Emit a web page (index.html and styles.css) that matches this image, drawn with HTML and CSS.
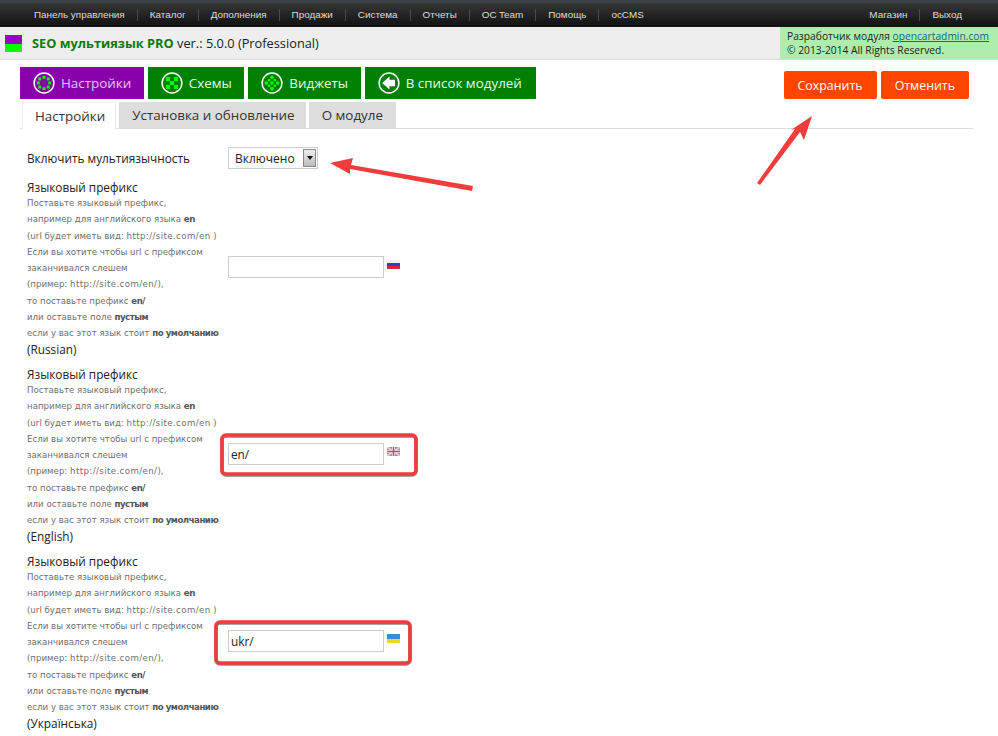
FILE: index.html
```html
<!DOCTYPE html>
<html lang="ru">
<head>
    <meta charset="UTF-8">
    <title>SEO мультиязык PRO</title>
    <link rel="stylesheet" href="styles.css">
</head>
<body>
    <div class="top-nav">
        <ul class="nav-list">
            <li>Панель управления</li>
            <li>Каталог</li>
            <li>Дополнения</li>
            <li>Продажи</li>
            <li>Система</li>
            <li>Отчеты</li>
            <li>OC Team</li>
            <li>Помощь</li>
            <li>ocCMS</li>
        </ul>
        <ul class="nav-list nav-right">
            <li>Магазин</li>
            <li>Выход</li>
        </ul>
    </div>

    <div class="title-bar">
        <div class="title-logo"></div>
        <h1 class="title-text"><b>SEO мультиязык PRO</b> ver.: 5.0.0 (Professional)</h1>
        <div class="dev-info">
            Разработчик модуля <a href="#">opencartadmin.com</a><br>
            © 2013-2014 All Rights Reserved.
        </div>
    </div>

    <div class="content">
        <div class="toolbar">
            <div class="mode-buttons">
                <a class="mode-btn active" href="#">
                    <svg class="mode-icon" viewBox="0 0 24 24">
                        <circle class="ring" cx="12" cy="12" r="10.8"/>
                        <g class="dots">
                            <rect x="10.4" y="4.2" width="3.2" height="3.2"/><rect x="15" y="6" width="3.2" height="3.2"/>
                            <rect x="16.6" y="10.4" width="3.2" height="3.2"/><rect x="15" y="14.8" width="3.2" height="3.2"/>
                            <rect x="10.4" y="16.6" width="3.2" height="3.2"/><rect x="5.8" y="14.8" width="3.2" height="3.2"/>
                            <rect x="4.2" y="10.4" width="3.2" height="3.2"/><rect x="5.8" y="6" width="3.2" height="3.2"/>
                        </g>
                    </svg>
                    Настройки
                </a>
                <a class="mode-btn" href="#">
                    <svg class="mode-icon" viewBox="0 0 24 24">
                        <circle class="ring" cx="12" cy="12" r="10.8"/>
                        <g class="dots">
                            <rect x="5.5" y="5.5" width="4.4" height="4.4"/><rect x="14.1" y="5.5" width="4.4" height="4.4"/>
                            <rect x="9.8" y="9.8" width="4.4" height="4.4"/>
                            <rect x="5.5" y="14.1" width="4.4" height="4.4"/><rect x="14.1" y="14.1" width="4.4" height="4.4"/>
                        </g>
                    </svg>
                    Схемы
                </a>
                <a class="mode-btn" href="#">
                    <svg class="mode-icon" viewBox="0 0 24 24">
                        <circle class="ring" cx="12" cy="12" r="10.8"/>
                        <g class="dots">
                            <circle cx="12" cy="5.8" r="2"/><circle cx="12" cy="12" r="2"/><circle cx="12" cy="18.2" r="2"/>
                            <circle cx="5.8" cy="12" r="2"/><circle cx="18.2" cy="12" r="2"/>
                            <circle cx="9" cy="9" r="1.4"/><circle cx="15" cy="9" r="1.4"/>
                            <circle cx="9" cy="15" r="1.4"/><circle cx="15" cy="15" r="1.4"/>
                        </g>
                    </svg>
                    Виджеты
                </a>
                <a class="mode-btn" href="#">
                    <svg class="mode-icon" viewBox="0 0 24 24">
                        <circle class="ring" cx="12" cy="12" r="10.8"/>
                        <path class="back-arrow" d="M4.5 12 L12.5 5 V8.5 H18.5 V15.5 H12.5 V19 Z"/>
                    </svg>
                    В список модулей
                </a>
            </div>
            <div class="action-buttons">
                <a class="action-btn" href="#">Сохранить</a>
                <a class="action-btn" href="#">Отменить</a>
            </div>
        </div>

        <div class="tabs">
            <a class="tab selected" href="#">Настройки</a>
            <a class="tab" href="#">Установка и обновление</a>
            <a class="tab" href="#">О модуле</a>
        </div>

        <div class="settings">
            <div class="switch-row">
                <div class="switch-label">Включить мультиязычность</div>
                <div class="select-box">
                    <span class="select-value">Включено</span>
                    <span class="select-arrow"></span>
                </div>
            </div>

            <div class="prefix-row">
                <div class="prefix-label">
                    <div class="prefix-title">Языковый префикс</div>
                    <div class="prefix-help">
                        Поставьте языковый префикс,<br>
                        например для английского языка <b>en</b><br>
                        (url будет иметь вид: <span class="url">http://site.com/en</span> )<br>
                        Если вы хотите чтобы url с префиксом<br>
                        заканчивался слешем<br>
                        (пример: <span class="url">http://site.com/en/</span>),<br>
                        то поставьте префикс <b>en/</b><br>
                        или оставьте поле <b>пустым</b><br>
                        если у вас этот язык стоит <b>по умолчанию</b>
                    </div>
                    <div class="prefix-lang">(Russian)</div>
                </div>
                <div class="prefix-field">
                    <input class="prefix-input" type="text" value="">
                    <svg class="flag" viewBox="0 0 13 9">
                        <rect width="13" height="3" fill="#eef0f6"/>
                        <rect y="3" width="13" height="3" fill="#2b3fd0"/>
                        <rect y="6" width="13" height="3" fill="#e0213a"/>
                    </svg>
                </div>
            </div>

            <div class="prefix-row">
                <div class="prefix-label">
                    <div class="prefix-title">Языковый префикс</div>
                    <div class="prefix-help">
                        Поставьте языковый префикс,<br>
                        например для английского языка <b>en</b><br>
                        (url будет иметь вид: <span class="url">http://site.com/en</span> )<br>
                        Если вы хотите чтобы url с префиксом<br>
                        заканчивался слешем<br>
                        (пример: <span class="url">http://site.com/en/</span>),<br>
                        то поставьте префикс <b>en/</b><br>
                        или оставьте поле <b>пустым</b><br>
                        если у вас этот язык стоит <b>по умолчанию</b>
                    </div>
                    <div class="prefix-lang">(English)</div>
                </div>
                <div class="prefix-field">
                    <input class="prefix-input" type="text" value="en/">
                    <svg class="flag" viewBox="0 0 13 9">
                        <rect width="13" height="9" fill="#8a86c8"/>
                        <path d="M0 0 L13 9 M13 0 L0 9" stroke="#e8c8d8" stroke-width="2"/>
                        <path d="M6.5 0 V9 M0 4.5 H13" stroke="#f4f0f4" stroke-width="3"/>
                        <path d="M6.5 0 V9 M0 4.5 H13" stroke="#e0405a" stroke-width="1.5"/>
                    </svg>
                </div>
            </div>

            <div class="prefix-row">
                <div class="prefix-label">
                    <div class="prefix-title">Языковый префикс</div>
                    <div class="prefix-help">
                        Поставьте языковый префикс,<br>
                        например для английского языка <b>en</b><br>
                        (url будет иметь вид: <span class="url">http://site.com/en</span> )<br>
                        Если вы хотите чтобы url с префиксом<br>
                        заканчивался слешем<br>
                        (пример: <span class="url">http://site.com/en/</span>),<br>
                        то поставьте префикс <b>en/</b><br>
                        или оставьте поле <b>пустым</b><br>
                        если у вас этот язык стоит <b>по умолчанию</b>
                    </div>
                    <div class="prefix-lang">(Українська)</div>
                </div>
                <div class="prefix-field">
                    <input class="prefix-input" type="text" value="ukr/">
                    <svg class="flag" viewBox="0 0 13 9">
                        <rect width="13" height="5" fill="#3d8ad6"/>
                        <rect y="5" width="13" height="4" fill="#f2d61e"/>
                    </svg>
                </div>
            </div>
        </div>
    </div>

    <!-- annotations drawn over the screenshot -->
    <svg class="annotations" viewBox="0 0 998 736">
        <g class="note-shadow" transform="translate(0 1)">
            <rect x="222" y="435" width="194" height="39" rx="4"/>
            <rect x="216" y="622" width="194" height="41" rx="4"/>
        </g>
        <g class="note-box">
            <rect x="222" y="435" width="194" height="39" rx="4"/>
            <rect x="216" y="622" width="194" height="41" rx="4"/>
        </g>
        <path class="note-arrow" d="M330 163 L353 158 L351 165 L473 186 L472 191 L350 169 L350 174 Z"/>
        <path class="note-arrow" d="M812 116 L804 140 L800 132 L760 185 L757 183 L795 129 L791 130 Z"/>
    </svg>
</body>
</html>
```

FILE: styles.css
```css
html {
    height: 736px;
    overflow: hidden;
}

body {
    margin: 0;
    background-color: white;
    font-family: "Open Sans", sans-serif;
    color: #222;
    position: relative;
}

a {
    text-decoration: none;
}

.top-nav {
    display: flex;
    justify-content: space-between;
    height: 24px;
    padding: 3px 24px 0 22px;
    background: linear-gradient(#3a3a3a, #111);
    box-shadow: inset 0 3px 0 #3b4249;
}

.nav-list {
    display: flex;
    align-items: center;
    list-style: none;
    margin: 0;
    padding: 0;
}

.nav-list li {
    padding: 0 12px;
    border-left: 1px solid #4a4a4a;
    height: 12px;
    line-height: 12px;
    font-family: "Liberation Sans", Arial, sans-serif;
    font-size: 9.9px;
    color: #ddd;
}

.nav-list li:first-child {
    border-left: none;
}

.title-bar {
    display: flex;
    align-items: center;
    height: 33px;
    background-color: #eee;
    border-bottom: 1px solid #ddd;
    box-sizing: border-box;
}

.title-logo {
    width: 17px;
    height: 17px;
    margin-left: 5px;
    background: linear-gradient(#90c 50%, #0f0 50%);
}

.title-text {
    margin: 0 0 0 10px;
    flex: 1;
    font-size: 12.8px;
    font-weight: normal;
    color: #222;
}

.title-text b {
    color: #0a7a0a;
}

.dev-info {
    width: 218px;
    height: 32px;
    box-sizing: border-box;
    padding: 2px 0 0 7px;
    background-color: #aeedae;
    font-size: 10.25px;
    line-height: 14px;
    color: #222;
    white-space: nowrap;
}

.dev-info a {
    color: #0a6a8a;
    text-decoration: underline;
}

.content {
    padding: 7px 25px 0 20px;
}

.toolbar {
    display: flex;
    justify-content: space-between;
}

.mode-buttons {
    display: flex;
    gap: 4px;
}

.mode-btn {
    display: flex;
    align-items: center;
    gap: 6px;
    height: 32px;
    padding: 0 12.5px 0 13px;
    background-color: #008000;
    font-size: 13.4px;
    color: #dfe;
}

.mode-btn:last-child {
    padding-right: 14px;
}

.mode-btn.active {
    background-color: #80a;
    color: #e3c6f0;
}

.mode-icon {
    width: 22px;
    height: 22px;
}

.ring {
    fill: none;
    stroke: white;
    stroke-width: 1.6;
}

.dots {
    fill: #0f0;
}

.back-arrow {
    fill: white;
}

.action-buttons {
    display: flex;
    gap: 4px;
    padding: 4px 4px 0 0;
}

.action-btn {
    height: 28px;
    line-height: 29px;
    padding: 0 14px;
    background-color: #ff4500;
    border-radius: 2px;
    font-size: 12.4px;
    color: #ffe;
}

.tabs {
    display: flex;
    gap: 3px;
    height: 27px;
    margin-top: 3px;
    padding-left: 2px;
    border-bottom: 1px solid #ddd;
    box-sizing: border-box;
}

.tab {
    height: 26px;
    line-height: 26px;
    padding: 0 11px 0 13px;
    background-color: #ddd;
    font-size: 13.4px;
    color: #333;
}

.tab:last-child {
    padding-right: 13px;
}

.tab.selected {
    background-color: white;
    border: 1px solid #eee;
    border-bottom: none;
    padding: 0 10px 0 12px;
}

.settings {
    padding: 18px 0 0 7px;
}

.switch-row {
    display: flex;
    align-items: center;
    height: 22px;
    margin-bottom: 6px;
}

.switch-label {
    width: 201px;
    font-size: 11.8px;
}

.select-box {
    display: flex;
    align-items: center;
    justify-content: space-between;
    box-sizing: border-box;
    width: 90px;
    height: 22px;
    padding: 0 1px 0 6px;
    border: 1px solid #ccc;
    font-size: 12px;
}

.select-arrow {
    position: relative;
    width: 13px;
    height: 18px;
    border: 1px solid #888;
    background: linear-gradient(#eee, #bbb);
    box-sizing: border-box;
}

.select-arrow::after {
    content: "";
    position: absolute;
    left: 3px;
    top: 6px;
    border: 3px solid transparent;
    border-top: 4px solid #111;
}

.prefix-row {
    display: flex;
    height: 187px;
}

.prefix-label {
    width: 201px;
    padding-top: 4px;
}

.prefix-title,
.prefix-lang {
    font-size: 11.8px;
    line-height: 16px;
}

.prefix-help {
    font-family: "DejaVu Sans", sans-serif;
    font-size: 8.65px;
    line-height: 16.25px;
    color: #6f6f6f;
    white-space: nowrap;
}

.prefix-help b {
    color: #555;
    letter-spacing: -0.5px;
}

.url {
    letter-spacing: 0.4px;
}

.prefix-field {
    display: flex;
    align-items: flex-start;
    gap: 3px;
    align-self: center;
    padding-bottom: 3px;
}

.prefix-input {
    box-sizing: border-box;
    width: 156px;
    height: 22px;
    padding: 0 2px;
    border: 1px solid #ccc;
    font-family: "Open Sans", sans-serif;
    font-size: 11.8px;
    color: #222;
}

.flag {
    width: 13px;
    height: 9px;
    margin-top: 4px;
}

.annotations {
    position: absolute;
    left: 0;
    top: 0;
    width: 998px;
    height: 736px;
    pointer-events: none;
}

.note-box rect {
    fill: none;
    stroke: #f13c3c;
    stroke-width: 3.6;
}

.note-shadow rect {
    fill: none;
    stroke: #888;
    stroke-width: 3.6;
}

.note-arrow {
    fill: #f13c3c;
}
```
